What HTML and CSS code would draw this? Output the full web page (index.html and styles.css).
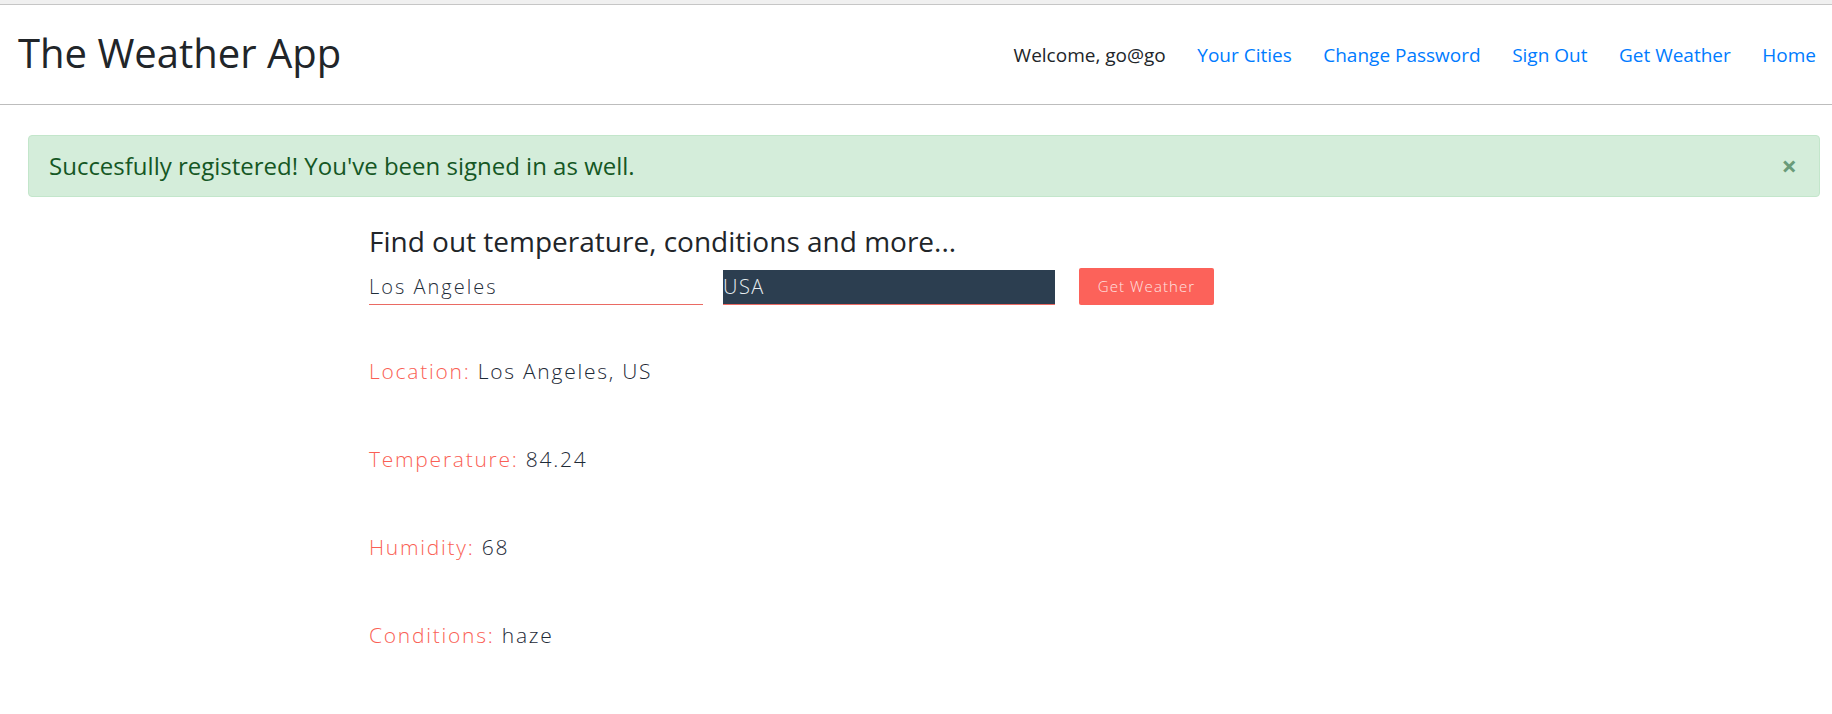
FILE: index.html
```html
<!DOCTYPE html>
<html lang="en">
<head>
<meta charset="utf-8">
<title>The Weather App</title>
<link rel="stylesheet" href="styles.css">
</head>
<body>
<div class="topband"></div>
<header class="header">
  <div class="brand">The Weather App</div>
  <nav class="nav">
    <span class="welcome">Welcome, go@go</span>
    <a href="#" class="nav-link">Your Cities</a>
    <a href="#" class="nav-link">Change Password</a>
    <a href="#" class="nav-link">Sign Out</a>
    <a href="#" class="nav-link">Get Weather</a>
    <a href="#" class="nav-link">Home</a>
  </nav>
</header>
<div class="alert">
  <span class="alert-text">Succesfully registered! You've been signed in as well.</span>
  <span class="close">&times;</span>
</div>
<main class="container">
  <h3 class="lead">Find out temperature, conditions and more...</h3>
  <form class="search">
    <input class="city" type="text" value="Los Angeles">
    <input class="country" type="text" value="USA">
    <button class="btn" type="button">Get Weather</button>
  </form>
  <div class="results">
    <p class="row"><span class="label">Location:</span> <span class="value">Los Angeles, US</span></p>
    <p class="row"><span class="label">Temperature:</span> <span class="value">84.24</span></p>
    <p class="row"><span class="label">Humidity:</span> <span class="value">68</span></p>
    <p class="row"><span class="label">Conditions:</span> <span class="value">haze</span></p>
  </div>
</main>
</body>
</html>
```
FILE: styles.css
```css
html, body {
  margin: 0;
  padding: 0;
  background: #ffffff;
  font-family: "Open Sans", "Liberation Sans", sans-serif;
  color: #212529;
}
.topband {
  height: 4px;
  background: #f0f0f0;
  border-bottom: 1px solid #c6c6c6;
}
.header {
  height: 99px;
  border-bottom: 1px solid #bdbdbd;
  display: flex;
  align-items: center;
  justify-content: space-between;
  padding: 0 16px 0 18px;
}
.brand {
  font-size: 40px;
  font-weight: 400;
  color: #212529;
  margin-top: -4px;
}
.nav {
  display: flex;
  align-items: center;
  gap: 31.5px;
  font-size: 19px;
}
.welcome {
  color: #212529;
}
.nav-link {
  color: #007bff;
  text-decoration: none;
}
.alert {
  margin: 30px 12px 0 28px;
  background: #d4edda;
  border: 1px solid #c3e6cb;
  border-radius: 4px;
  color: #155724;
  display: flex;
  align-items: center;
  justify-content: space-between;
  padding: 12px 22px 13px 20px;
  font-size: 24px;
  line-height: 35px;
}
.close {
  font-size: 27px;
  font-weight: 700;
  color: #6a9b79;
  line-height: 1;
}
.container {
  width: 1094px;
  margin: 0 auto;
}
.lead {
  margin: 28px 0 0;
  font-size: 28px;
  font-weight: 400;
  line-height: 1.2;
  color: #212529;
}
.search {
  display: flex;
  align-items: flex-end;
  margin-top: 9px;
}
.city, .country {
  box-sizing: border-box;
  height: 36px;
  border: 0;
  border-bottom: 1px solid #ea6a63;
  padding: 0;
  font-family: "Open Sans", sans-serif;
  font-size: 20px;
  font-weight: 300;
  letter-spacing: 2px;
  outline: none;
}
.city {
  width: 334px;
  background: transparent;
  color: #1f2d3a;
}
.country {
  width: 332px;
  height: 35px;
  margin-left: 20px;
  background: #2c3e50;
  color: #e8edf1;
  letter-spacing: 1.5px;
}
.btn {
  box-sizing: border-box;
  width: 135px;
  height: 37px;
  margin-left: 24px;
  border: 0;
  border-radius: 2px;
  background: #fc625a;
  color: #ffe3e0;
  font-family: "Open Sans", sans-serif;
  font-size: 15px;
  font-weight: 300;
  letter-spacing: 1.1px;
}
.results {
  display: flex;
  flex-direction: column;
  gap: 60px;
  margin-top: 52px;
}
.row {
  margin: 0;
  font-size: 21px;
  font-weight: 300;
  line-height: 28px;
  letter-spacing: 1.75px;
}
.label {
  color: #fa5f55;
}
.value {
  color: #1d2a37;
}
```
